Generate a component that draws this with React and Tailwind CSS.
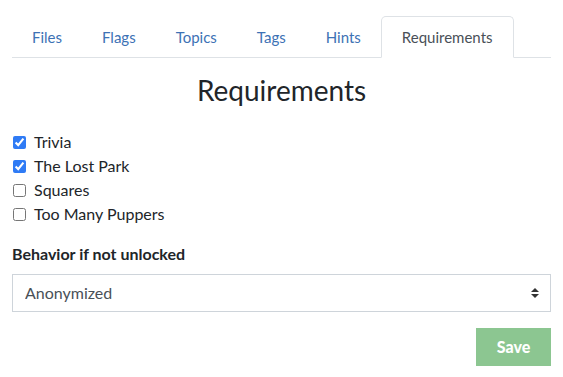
import React from 'react';

const TABS = ['Files', 'Flags', 'Topics', 'Tags', 'Hints', 'Requirements'];

const REQUIREMENTS = [
  { name: 'Trivia', checked: true },
  { name: 'The Lost Park', checked: true },
  { name: 'Squares', checked: false },
  { name: 'Too Many Puppers', checked: false },
];

export default function App() {
  return (
    <div className="min-h-[377px] bg-white px-3 pt-4 text-[#212529]" style={{ fontFamily: 'Lato, "Open Sans", sans-serif' }}>
      {/* Tabs */}
      <div className="flex items-end border-b border-[#dee2e6]">
        {TABS.map((tab) => {
          const active = tab === 'Requirements';
          return (
            <div
              key={tab}
              className={
                active
                  ? '-mb-px rounded-t-[5px] border border-[#dee2e6] border-b-white bg-white px-5 py-2 text-[15px] leading-6 text-[#495057]'
                  : 'px-5 py-2 text-[15px] leading-6 text-[#3d72b5]'
              }
            >
              {tab}
            </div>
          );
        })}
      </div>

      {/* Heading */}
      <h1 className="mt-[15px] text-center text-[28px] leading-[34px] text-[#212529]">Requirements</h1>

      {/* Requirement checkboxes */}
      <div className="mt-[23px] flex flex-col">
        {REQUIREMENTS.map((req) => (
          <label key={req.name} className="flex h-6 items-center text-base leading-6">
            <input
              type="checkbox"
              defaultChecked={req.checked}
              className="ml-px mr-2 h-[13px] w-[13px] accent-[#2f7bf5]"
            />
            <span>{req.name}</span>
          </label>
        ))}
      </div>

      {/* Behavior */}
      <div className="mt-4 text-base font-bold leading-6">Behavior if not unlocked</div>
      <div className="relative mt-2">
        <select
          defaultValue="anonymized"
          className="h-[38px] w-full appearance-none rounded-none border border-[#ced4da] bg-white px-3 text-base text-[#495057] outline-none"
          style={{ fontFamily: 'Lato, "Open Sans", sans-serif' }}
        >
          <option value="anonymized">Anonymized</option>
          <option value="hidden">Hidden</option>
        </select>
        <svg
          className="pointer-events-none absolute right-[12px] top-[14px]"
          width="8"
          height="10"
          viewBox="0 0 8 10"
        >
          <path d="M4 0 L8 4 H0 Z" fill="#333" />
          <path d="M4 10 L8 6 H0 Z" fill="#333" />
        </svg>
      </div>

      {/* Save */}
      <div className="mt-4 flex justify-end">
        <button className="h-[38px] w-[75px] bg-[#8cc691] text-base font-black text-white">Save</button>
      </div>
    </div>
  );
}
